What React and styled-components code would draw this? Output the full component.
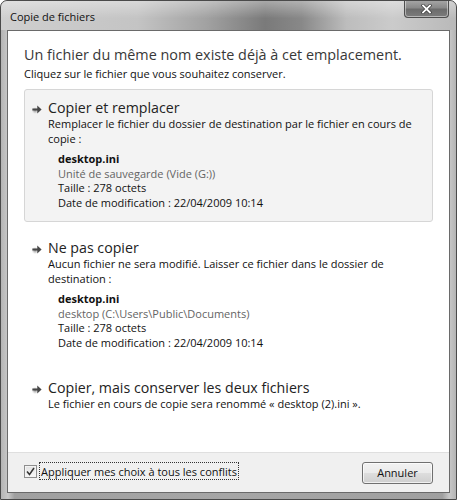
import React from 'react';
import styled, { createGlobalStyle } from 'styled-components';

const Global = createGlobalStyle`
  html, body { margin: 0; padding: 0; background: #ffffff; }
  body { font-family: "Open Sans", "Noto Sans", sans-serif; color: #1e1e1e; }
  * { box-sizing: border-box; }
`;

const Window = styled.div`
  width: 457px;
  height: 500px;
  display: flex;
  flex-direction: column;
  border: 1px solid #4a4a4a;
  border-radius: 7px 7px 0 0;
  background: linear-gradient(90deg, #b4b4b4 0%, #c8c8c8 1.5%, #a0a0a0 3%, #a6a6a6 50%, #a0a0a0 97%, #c8c8c8 98.5%, #b4b4b4 100%);
  padding: 0 6px 6px;
  overflow: hidden;
`;

const TitleBar = styled.div`
  height: 29px;
  margin: 0 -6px;
  padding: 0 7px 0 9px;
  display: flex;
  justify-content: space-between;
  align-items: flex-start;
  background:
    linear-gradient(180deg, rgba(255,255,255,0.35) 0%, rgba(255,255,255,0) 60%),
    linear-gradient(90deg, #cfcfcf 0%, #c4c4c4 30%, #a2a2a2 45%, #7a7a7a 58%, #888888 66%, #bdbdbd 76%, #cbcbcb 86%, #b9b9b9 100%);
  border-radius: 6px 6px 0 0;
`;

const TitleText = styled.span`
  font-size: 11px;
  line-height: 15px;
  margin-top: 8px;
  color: #111;
`;

const CloseButton = styled.div`
  width: 45px;
  height: 18px;
  margin-top: -1px;
  display: flex;
  align-items: center;
  justify-content: center;
  border: 1px solid #4e4e4e;
  border-top: none;
  border-radius: 0 0 4px 4px;
  background: linear-gradient(180deg, #a8a8a8 0%, #8a8a8a 45%, #6c6c6c 55%, #7c7c7c 100%);
  box-shadow: inset 0 0 0 1px rgba(255,255,255,0.45);
`;

const Content = styled.div`
  flex: 1;
  display: flex;
  flex-direction: column;
  background: #ffffff;
  border: 1px solid #6a6a6a;
`;

const Main = styled.div`
  flex: 1;
  display: flex;
  flex-direction: column;
  padding: 14px 16px 0;
`;

const Heading = styled.div`
  font-size: 14.4px;
  line-height: 20px;
  color: #383838;
  white-space: nowrap;
`;

const SubHeading = styled.div`
  font-size: 11px;
  line-height: 15px;
  margin-top: 1px;
  margin-bottom: 8px;
  color: #111;
`;

const Options = styled.div`
  display: flex;
  flex-direction: column;
  gap: 7px;
`;

const Card = styled.div`
  display: flex;
  gap: 5px;
  padding: 10px 12px 11px 6px;
  border: 1px solid ${p => (p.$selected ? '#d6d6d6' : 'transparent')};
  border-radius: 3px;
  background: ${p => (p.$selected ? '#f3f3f3' : 'transparent')};
`;

const IconBox = styled.div`
  width: 12px;
  height: 16px;
  flex: none;
  display: flex;
  align-items: center;
  padding-top: 2px;
`;

const CardBody = styled.div`
  display: flex;
  flex-direction: column;
`;

const CardTitle = styled.div`
  font-size: 14.2px;
  line-height: 16px;
  color: #222;
`;

const CardDesc = styled.div`
  font-size: 11px;
  line-height: 15px;
  color: #111;
`;

const Details = styled.div`
  margin-top: 6px;
  padding-left: 10px;
  font-size: 11px;
  line-height: 14.5px;
  color: #111;
`;

const DetailLine = styled.div`
  font-weight: ${p => (p.$bold ? 700 : 400)};
  color: ${p => (p.$muted ? '#646464' : '#111')};
`;

const Footer = styled.div`
  height: 40px;
  flex: none;
  display: flex;
  align-items: center;
  justify-content: space-between;
  padding: 0 16px 0 16px;
  background: #f0f0f0;
  border-top: 1px solid #dfdfdf;
`;

const CheckRow = styled.label`
  display: flex;
  align-items: center;
  gap: 3px;
  margin-top: -3px;
`;

const CheckBox = styled.span`
  width: 13px;
  height: 13px;
  display: flex;
  align-items: center;
  justify-content: center;
  border: 1px solid #8e8e8e;
  background: linear-gradient(180deg, #e2e2e2, #f8f8f8);
  box-shadow: inset 0 0 0 1px #f4f4f4;
`;

const CheckLabel = styled.span`
  font-size: 11px;
  line-height: 15px;
  padding: 1px 1px 0;
  outline: 1px dotted #333;
  color: #111;
`;

const Button = styled.div`
  width: 71px;
  height: 22px;
  display: flex;
  align-items: center;
  justify-content: center;
  font-size: 11px;
  color: #111;
  border: 1px solid #707070;
  border-radius: 3px;
  background: linear-gradient(180deg, #f2f2f2 0%, #ebebeb 48%, #dddddd 52%, #cfcfcf 100%);
  box-shadow: inset 0 0 0 1px rgba(255,255,255,0.7);
`;

const Arrow = () => (
  <svg width="13" height="13" viewBox="0 0 13 13">
    <defs>
      <radialGradient id="glow" cx="0.5" cy="0.5" r="0.5">
        <stop offset="0" stopColor="#8c8c8c" />
        <stop offset="0.5" stopColor="#c4c4c4" stopOpacity="0.7" />
        <stop offset="1" stopColor="#ffffff" stopOpacity="0" />
      </radialGradient>
    </defs>
    <ellipse cx="4.5" cy="7.5" rx="4.5" ry="4.5" fill="url(#glow)" />
    <path d="M1.5 5.3 H6.8 V2.3 L11.5 6.5 L6.8 10.7 V7.7 H1.5 Z" fill="#474747" />
  </svg>
);

const CloseGlyph = () => (
  <svg width="11" height="10" viewBox="0 0 11 10">
    <path d="M2 1.5 L9 8.5 M9 1.5 L2 8.5" stroke="#3a3a3a" strokeWidth="3.2" strokeLinecap="square" />
    <path d="M2 1.5 L9 8.5 M9 1.5 L2 8.5" stroke="#ffffff" strokeWidth="1.8" strokeLinecap="square" />
  </svg>
);

const Check = () => (
  <svg width="9" height="9" viewBox="0 0 9 9">
    <path d="M1 4.5 L3.5 7.5 L8 1" fill="none" stroke="#333" strokeWidth="1.5" />
  </svg>
);

const options = [
  {
    title: 'Copier et remplacer',
    desc: ['Remplacer le fichier du dossier de destination par le fichier en cours de', 'copie :'],
    details: ['desktop.ini', 'Unité de sauvegarde (Vide (G:))', 'Taille : 278 octets', 'Date de modification : 22/04/2009 10:14'],
    selected: true,
  },
  {
    title: 'Ne pas copier',
    desc: ['Aucun fichier ne sera modifié. Laisser ce fichier dans le dossier de', 'destination :'],
    details: ['desktop.ini', 'desktop (C:\\Users\\Public\\Documents)', 'Taille : 278 octets', 'Date de modification : 22/04/2009 10:14'],
  },
  {
    title: 'Copier, mais conserver les deux fichiers',
    desc: ['Le fichier en cours de copie sera renommé « desktop (2).ini ».'],
  },
];

export default function App() {
  return (
    <>
      <Global />
      <Window>
        <TitleBar>
          <TitleText>Copie de fichiers</TitleText>
          <CloseButton><CloseGlyph /></CloseButton>
        </TitleBar>
        <Content>
          <Main>
            <Heading>Un fichier du même nom existe déjà à cet emplacement.</Heading>
            <SubHeading>Cliquez sur le fichier que vous souhaitez conserver.</SubHeading>
            <Options>
              {options.map(o => (
                <Card key={o.title} $selected={o.selected}>
                  <IconBox><Arrow /></IconBox>
                  <CardBody>
                    <CardTitle>{o.title}</CardTitle>
                    {o.desc.map(d => <CardDesc key={d}>{d}</CardDesc>)}
                    {o.details && (
                      <Details>
                        {o.details.map((d, i) => (
                          <DetailLine key={i} $bold={i === 0} $muted={i === 1}>{d}</DetailLine>
                        ))}
                      </Details>
                    )}
                  </CardBody>
                </Card>
              ))}
            </Options>
          </Main>
          <Footer>
            <CheckRow>
              <CheckBox><Check /></CheckBox>
              <CheckLabel>Appliquer mes choix à tous les conflits</CheckLabel>
            </CheckRow>
            <Button>Annuler</Button>
          </Footer>
        </Content>
      </Window>
    </>
  );
}
